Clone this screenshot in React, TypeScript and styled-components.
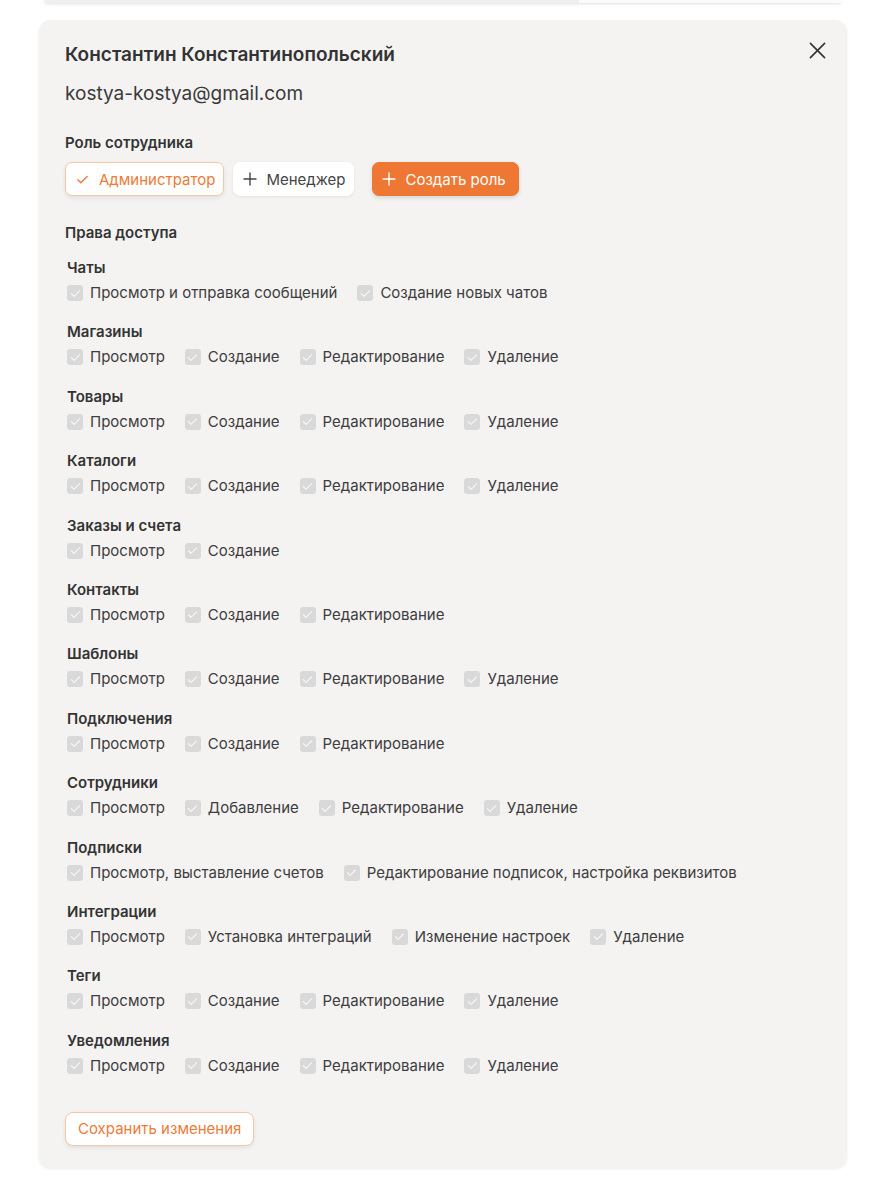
import styled, { createGlobalStyle } from "styled-components";

const GlobalStyle = createGlobalStyle`
  body {
    margin: 0;
    background: #ffffff;
    font-family: Inter, "Noto Sans", sans-serif;
    color: #333333;
  }
  * {
    box-sizing: border-box;
  }
`;

type Group = { title: string; items: string[] };

const groups: Group[] = [
  { title: "Чаты", items: ["Просмотр и отправка сообщений", "Создание новых чатов"] },
  { title: "Магазины", items: ["Просмотр", "Создание", "Редактирование", "Удаление"] },
  { title: "Товары", items: ["Просмотр", "Создание", "Редактирование", "Удаление"] },
  { title: "Каталоги", items: ["Просмотр", "Создание", "Редактирование", "Удаление"] },
  { title: "Заказы и счета", items: ["Просмотр", "Создание"] },
  { title: "Контакты", items: ["Просмотр", "Создание", "Редактирование"] },
  { title: "Шаблоны", items: ["Просмотр", "Создание", "Редактирование", "Удаление"] },
  { title: "Подключения", items: ["Просмотр", "Создание", "Редактирование"] },
  { title: "Сотрудники", items: ["Просмотр", "Добавление", "Редактирование", "Удаление"] },
  {
    title: "Подписки",
    items: ["Просмотр, выставление счетов", "Редактирование подписок, настройка реквизитов"],
  },
  {
    title: "Интеграции",
    items: ["Просмотр", "Установка интеграций", "Изменение настроек", "Удаление"],
  },
  { title: "Теги", items: ["Просмотр", "Создание", "Редактирование", "Удаление"] },
  { title: "Уведомления", items: ["Просмотр", "Создание", "Редактирование", "Удаление"] },
];

const Page = styled.div`
  width: 808px;
  margin-left: 39px;
  padding-bottom: 32px;
`;

const PrevCard = styled.div`
  height: 3px;
  margin: 0 5px 17px;
  border-radius: 0 0 10px 10px;
  background: linear-gradient(90deg, #efefef 0 67%, #fbfbfb 67% 100%);
  box-shadow: 0 1px 3px rgba(0, 0, 0, 0.12);
`;

const Card = styled.section`
  position: relative;
  background: #f4f3f2;
  border-radius: 12px;
  padding: 23px 26px 22px;
  box-shadow: 0 1px 3px rgba(0, 0, 0, 0.08);
`;

const CloseButton = styled.button`
  position: absolute;
  top: 20px;
  right: 20px;
  width: 20px;
  height: 20px;
  padding: 0;
  border: none;
  background: transparent;
  color: #333;
  cursor: pointer;
  display: flex;
  align-items: center;
  justify-content: center;
`;

const Name = styled.h2`
  margin: 0;
  font-size: 19px;
  line-height: 24px;
  font-weight: 600;
  color: #333;
`;

const Email = styled.div`
  margin-top: 15px;
  font-size: 19px;
  line-height: 24px;
  color: #3a3a3a;
`;

const SectionTitle = styled.h3<{ $top: number }>`
  margin: ${({ $top }) => $top}px 0 0;
  font-size: 15px;
  line-height: 20px;
  font-weight: 600;
  color: #333;
`;

const RoleRow = styled.div`
  display: flex;
  align-items: center;
  margin-top: 9px;
`;

const RoleButton = styled.button<{ $variant: "active" | "plain" | "primary" }>`
  height: 34px;
  display: inline-flex;
  align-items: center;
  gap: 9px;
  padding: ${({ $variant }) => ($variant === "primary" ? "0 12px 0 9px" : "0 8px 0 9px")};
  border-radius: 7px;
  font-family: inherit;
  font-size: 15px;
  cursor: pointer;
  margin-right: ${({ $variant }) => ($variant === "plain" ? "18px" : "9px")};
  ${({ $variant }) =>
    $variant === "active"
      ? `
    background: #ffffff;
    color: #ef7b36;
    border: 1px solid #f6c7a4;
    box-shadow: 0 2px 4px rgba(0, 0, 0, 0.08);
  `
      : $variant === "plain"
      ? `
    background: #ffffff;
    color: #444;
    border: 1px solid #ffffff;
    box-shadow: 0 1px 3px rgba(0, 0, 0, 0.07);
  `
      : `
    background: #ee7733;
    color: #fff;
    border: 1px solid #ee7733;
    box-shadow: 0 2px 4px rgba(0, 0, 0, 0.12);
  `}
`;

const Groups = styled.div`
  margin-top: 15px;
  display: flex;
  flex-direction: column;
  gap: 19.4px;
`;

const GroupBlock = styled.div`
  display: flex;
  flex-direction: column;
  gap: 5px;
`;

const GroupTitle = styled.div`
  font-size: 15px;
  line-height: 20px;
  font-weight: 600;
  color: #333;
  padding-left: 2px;
`;

const ItemsRow = styled.div`
  display: flex;
  align-items: center;
  gap: 20px;
  padding-left: 2px;
`;

const Item = styled.label`
  display: inline-flex;
  align-items: center;
  gap: 7px;
  font-size: 15px;
  line-height: 20px;
  color: #3d3d3d;
`;

const Box = styled.span`
  width: 16px;
  height: 16px;
  border-radius: 3px;
  background: #d9d9d9;
  display: inline-flex;
  align-items: center;
  justify-content: center;
`;

const SaveButton = styled.button`
  margin-top: 36px;
  height: 34px;
  padding: 0 12px;
  background: #ffffff;
  color: #ef7b36;
  border: 1px solid #f6c7a4;
  border-radius: 8px;
  font-family: inherit;
  font-size: 15px;
  box-shadow: 0 2px 4px rgba(0, 0, 0, 0.08);
  cursor: pointer;
`;

const CheckIcon = ({ color, size }: { color: string; size: number }) => (
  <svg width={size} height={size} viewBox="0 0 16 16" fill="none">
    <path d="M3 8.3l3.2 3.2L13 4.7" stroke={color} strokeWidth="1.5" strokeLinecap="round" strokeLinejoin="round" />
  </svg>
);

const PlusIcon = ({ color }: { color: string }) => (
  <svg width="14" height="14" viewBox="0 0 14 14" fill="none">
    <path d="M7 1v12M1 7h12" stroke={color} strokeWidth="1.4" strokeLinecap="round" />
  </svg>
);

const App = () => {
  return (
    <>
      <GlobalStyle />
      <Page>
        <PrevCard />
        <Card>
          <CloseButton aria-label="Закрыть">
            <svg width="17" height="17" viewBox="0 0 18 18" fill="none">
              <path d="M1.5 1.5l15 15M16.5 1.5l-15 15" stroke="#333" strokeWidth="1.7" strokeLinecap="round" />
            </svg>
          </CloseButton>
          <Name>Константин Константинопольский</Name>
          <Email>kostya-kostya@gmail.com</Email>

          <SectionTitle $top={27}>Роль сотрудника</SectionTitle>
          <RoleRow>
            <RoleButton $variant="active">
              <CheckIcon color="#ef7b36" size={15} />
              Администратор
            </RoleButton>
            <RoleButton $variant="plain">
              <PlusIcon color="#444" />
              Менеджер
            </RoleButton>
            <RoleButton $variant="primary">
              <PlusIcon color="#fff" />
              Создать роль
            </RoleButton>
          </RoleRow>

          <SectionTitle $top={27}>Права доступа</SectionTitle>
          <Groups>
            {groups.map((g) => (
              <GroupBlock key={g.title}>
                <GroupTitle>{g.title}</GroupTitle>
                <ItemsRow>
                  {g.items.map((item) => (
                    <Item key={item}>
                      <Box>
                        <CheckIcon color="#f7f7f7" size={13} />
                      </Box>
                      {item}
                    </Item>
                  ))}
                </ItemsRow>
              </GroupBlock>
            ))}
          </Groups>

          <SaveButton>Сохранить изменения</SaveButton>
        </Card>
      </Page>
    </>
  );
};

export default App;
